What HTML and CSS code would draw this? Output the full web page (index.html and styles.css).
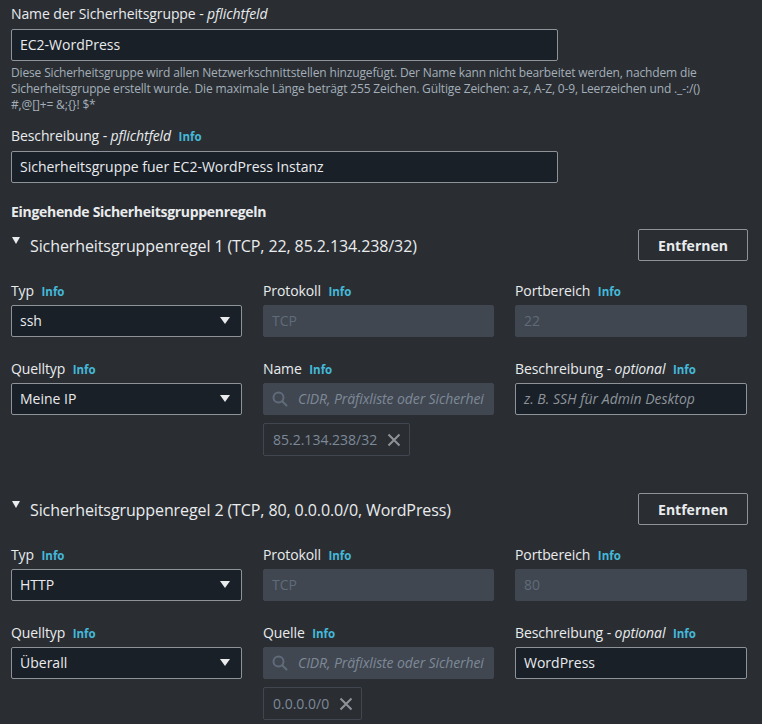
FILE: index.html
```html
<!DOCTYPE html>
<html lang="de">
<head>
<meta charset="utf-8">
<link rel="stylesheet" href="styles.css">
</head>
<body>
<div class="page">
  <div class="field top">
    <div class="label">Name der Sicherheitsgruppe - <i>pflichtfeld</i></div>
    <div class="input wide">EC2-WordPress</div>
    <div class="help">Diese Sicherheitsgruppe wird allen Netzwerkschnittstellen hinzugefügt. Der Name kann nicht bearbeitet werden, nachdem die Sicherheitsgruppe erstellt wurde. Die maximale Länge beträgt 255 Zeichen. Gültige Zeichen: a-z, A-Z, 0-9, Leerzeichen und ._-:/()<br>#,@[]+= &amp;;{}! $*</div>
  </div>
  <div class="field second">
    <div class="label">Beschreibung - <i>pflichtfeld</i> <span class="info">Info</span></div>
    <div class="input wide">Sicherheitsgruppe fuer EC2-WordPress Instanz</div>
  </div>

  <div class="section-title">Eingehende Sicherheitsgruppenregeln</div>

  <div class="rule">
    <div class="rule-head">
      <div class="rule-title"><span class="caret"></span>Sicherheitsgruppenregel 1 (TCP, 22, 85.2.134.238/32)</div>
      <button class="btn">Entfernen</button>
    </div>
    <div class="grid">
      <div class="cell">
        <div class="label">Typ <span class="info">Info</span></div>
        <div class="input select">ssh<span class="arrow"></span></div>
      </div>
      <div class="cell">
        <div class="label">Protokoll <span class="info">Info</span></div>
        <div class="input disabled">TCP</div>
      </div>
      <div class="cell">
        <div class="label">Portbereich <span class="info">Info</span></div>
        <div class="input disabled">22</div>
      </div>
      <div class="cell row2">
        <div class="label">Quelltyp <span class="info">Info</span></div>
        <div class="input select">Meine IP<span class="arrow"></span></div>
      </div>
      <div class="cell row2">
        <div class="label">Name <span class="info">Info</span></div>
        <div class="input disabled search"><svg class="mag" width="16" height="16" viewBox="0 0 16 16"><circle cx="6.5" cy="6.5" r="5" fill="none" stroke="#5f6b7a" stroke-width="2"/><line x1="10.2" y1="10.2" x2="14.5" y2="14.5" stroke="#5f6b7a" stroke-width="2" stroke-linecap="round"/></svg><span class="ph">CIDR, Präfixliste oder Sicherhei</span></div>
        <div class="token">85.2.134.238/32<svg class="x" width="14" height="14" viewBox="0 0 14 14"><path d="M1.5 1.5 L12.5 12.5 M12.5 1.5 L1.5 12.5" stroke="#8d9399" stroke-width="2" fill="none"/></svg></div>
      </div>
      <div class="cell row2">
        <div class="label">Beschreibung - <i>optional</i> <span class="info">Info</span></div>
        <div class="input"><span class="ph">z. B. SSH für Admin Desktop</span></div>
      </div>
    </div>
  </div>

  <div class="rule rule-2">
    <div class="rule-head">
      <div class="rule-title"><span class="caret"></span>Sicherheitsgruppenregel 2 (TCP, 80, 0.0.0.0/0, WordPress)</div>
      <button class="btn">Entfernen</button>
    </div>
    <div class="grid">
      <div class="cell">
        <div class="label">Typ <span class="info">Info</span></div>
        <div class="input select">HTTP<span class="arrow"></span></div>
      </div>
      <div class="cell">
        <div class="label">Protokoll <span class="info">Info</span></div>
        <div class="input disabled">TCP</div>
      </div>
      <div class="cell">
        <div class="label">Portbereich <span class="info">Info</span></div>
        <div class="input disabled">80</div>
      </div>
      <div class="cell row2">
        <div class="label">Quelltyp <span class="info">Info</span></div>
        <div class="input select">Überall<span class="arrow"></span></div>
      </div>
      <div class="cell row2">
        <div class="label">Quelle <span class="info">Info</span></div>
        <div class="input disabled search"><svg class="mag" width="16" height="16" viewBox="0 0 16 16"><circle cx="6.5" cy="6.5" r="5" fill="none" stroke="#5f6b7a" stroke-width="2"/><line x1="10.2" y1="10.2" x2="14.5" y2="14.5" stroke="#5f6b7a" stroke-width="2" stroke-linecap="round"/></svg><span class="ph">CIDR, Präfixliste oder Sicherhei</span></div>
        <div class="token">0.0.0.0/0<svg class="x" width="14" height="14" viewBox="0 0 14 14"><path d="M1.5 1.5 L12.5 12.5 M12.5 1.5 L1.5 12.5" stroke="#8d9399" stroke-width="2" fill="none"/></svg></div>
      </div>
      <div class="cell row2">
        <div class="label">Beschreibung - <i>optional</i> <span class="info">Info</span></div>
        <div class="input">WordPress</div>
      </div>
    </div>
  </div>
</div>
</body>
</html>
```

FILE: styles.css
```css
* { box-sizing: border-box; }
html, body { margin: 0; padding: 0; }
body {
  background: #2a2e33;
  color: #d1d5db;
  font-family: "Open Sans", "Noto Sans", sans-serif;
  font-size: 14px;
  overflow: hidden;
}
.page {
  width: 736px;
  margin-left: 11px;
  padding-top: 4px;
}
.label {
  height: 20px;
  line-height: 20px;
  font-size: 14px;
  color: #e9ebed;
  white-space: nowrap;
  letter-spacing: -0.1px;
}
.label i { font-style: italic; }
.info {
  color: #44b9d9;
  font-weight: 700;
  font-size: 11.5px;
  margin-left: 4px;
  letter-spacing: 0;
}
.input {
  height: 32px;
  margin-top: 5px;
  background: #192028;
  border: 1px solid #8d9399;
  border-radius: 2px;
  padding: 0 8px;
  line-height: 30px;
  font-size: 14px;
  color: #e9ebed;
  white-space: nowrap;
  overflow: hidden;
  position: relative;
}
.input.wide { width: 547px; }
.help {
  margin-top: 4px;
  font-size: 12px;
  line-height: 16px;
  color: #a4aeb9;
  letter-spacing: -0.15px;
}
.second { margin-top: 13px; }
.section-title {
  margin-top: 19px;
  height: 20px;
  line-height: 20px;
  font-weight: 700;
  font-size: 14px;
  color: #e9ebed;
  letter-spacing: -0.3px;
}
.rule { margin-top: 7px; }
.rule-2 { margin-top: 37px; }
.rule-head {
  display: flex;
  justify-content: space-between;
  align-items: center;
  height: 32px;
}
.rule-title {
  display: flex;
  align-items: center;
  font-size: 16px;
  color: #e9ebed;
  padding-top: 2px;
  letter-spacing: -0.1px;
}
.caret {
  width: 0;
  height: 0;
  border-left: 4.5px solid transparent;
  border-right: 4.5px solid transparent;
  border-top: 7px solid #e9ebed;
  margin: -12px 10px 0 1px;
}
.btn {
  width: 110px;
  height: 32px;
  margin-right: -1px;
  background: transparent;
  border: 1px solid #8d9399;
  border-radius: 2px;
  color: #e9ebed;
  font-family: inherit;
  font-weight: 700;
  font-size: 14px;
  padding: 0;
}
.grid {
  display: grid;
  grid-template-columns: 231px 231px 232px;
  column-gap: 21px;
  margin-top: 20px;
  align-items: start;
}
.row2 { margin-top: 22px; }
.cell .input { margin-top: 4px; }
.select .arrow {
  position: absolute;
  right: 11px;
  top: 11px;
  width: 0;
  height: 0;
  border-left: 5px solid transparent;
  border-right: 5px solid transparent;
  border-top: 7px solid #e9ebed;
}
.input.disabled {
  background: #414750;
  border-color: #414750;
  color: #5f6b7a;
}
.search {
  display: flex;
  align-items: center;
}
.mag { flex: none; margin-right: 10px; }
.ph {
  font-style: italic;
  color: #8d9399;
}
.search .ph {
  color: #7d8998;
  letter-spacing: -0.1px;
}
.token {
  display: inline-flex;
  align-items: center;
  height: 33px;
  margin-top: 8px;
  padding: 0 8px 0 9px;
  border: 1px solid #414750;
  border-radius: 2px;
  color: #7d8998;
  font-size: 14px;
}
.token .x { margin-left: 10px; }
```
